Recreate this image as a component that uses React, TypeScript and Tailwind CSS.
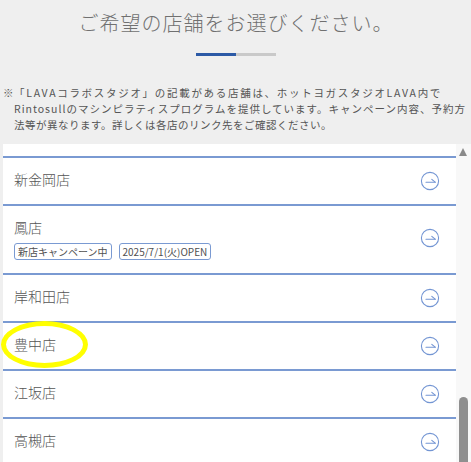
import React from 'react'

const stores = [
  { name: '新金岡店' },
  { name: '鳳店', tags: ['新店キャンペーン中', '2025/7/1(火)OPEN'] },
  { name: '岸和田店' },
  { name: '豊中店' },
  { name: '江坂店' },
  { name: '高槻店' },
]

function CircleArrow() {
  return (
    <svg width="20" height="20" viewBox="0 0 20 20" fill="none" stroke="#7395d3" strokeWidth="1.1">
      <circle cx="10" cy="10" r="8.6" />
      <path d="M6 11.2 H15.2" strokeLinecap="round" />
      <path d="M15.2 11.2 L11.8 8.4" strokeLinecap="round" />
    </svg>
  )
}

export default function App() {
  return (
    <div
      className="relative h-[462px] w-full overflow-hidden bg-[#efefef]"
      style={{ fontFamily: '"Noto Sans CJK JP", "Noto Sans", sans-serif' }}
    >
      {/* heading */}
      <div className="pt-[9px] flex flex-col items-center">
        <h1 className="text-[20px] leading-[28px] font-light tracking-[1px] text-[#707070] pl-[1px]">
          ご希望の店舗をお選びください。
        </h1>
        <div className="mt-[16px] flex h-[3px] w-[80px]">
          <div className="w-[40px] bg-[#2c5aa6]" />
          <div className="flex-1 bg-[#c9c9c9]" />
        </div>
      </div>

      {/* note */}
      <div className="mt-[29px] flex px-[3px] text-[10.5px] leading-[16px] text-[#555]">
        <span className="w-[11px] shrink-0">※</span>
        <div>
          <span className="block whitespace-nowrap tracking-[1.7px]">
            「LAVAコラボスタジオ」の記載がある店舗は、ホットヨガスタジオLAVA内で
          </span>
          <span className="block whitespace-nowrap tracking-[1px]">
            Rintosullのマシンピラティスプログラムを提供しています。キャンペーン内容、予約方
          </span>
          <span className="block whitespace-nowrap tracking-[0.5px]">
            法等が異なります。詳しくは各店のリンク先をご確認ください。
          </span>
        </div>
      </div>

      {/* store list panel */}
      <div className="mt-[11px] ml-[3px] flex h-[318px] overflow-hidden bg-white">
        <div className="flex-1">
          <div className="h-[12px]" />
          {stores.map((s) => (
            <div
              key={s.name}
              className={`flex items-center justify-between border-t-2 border-[#7a9ad2] pl-[11px] pr-[16px] ${
                s.tags ? 'pt-[10px] pb-[13px]' : 'h-[48px]'
              }`}
            >
              <div className={s.tags ? '' : 'pb-[4px]'}>
                <div className="text-[14px] leading-[22px] font-light text-[#555]">{s.name}</div>
                {s.tags && (
                  <div className="mt-[5px] flex gap-[7px]">
                    {s.tags.map((t) => (
                      <span
                        key={t}
                        className="flex h-[17px] items-center rounded-[3px] border border-[#7a9ad2] px-[3px] text-[10px] text-[#505050]"
                      >
                        {t}
                      </span>
                    ))}
                  </div>
                )}
              </div>
              <CircleArrow />
            </div>
          ))}
        </div>

        {/* scrollbar */}
        <div className="relative w-[15px] shrink-0 bg-[#f8f8f8]">
          <div className="absolute left-[3px] top-[4px] h-0 w-0 border-x-[4.5px] border-b-[8px] border-x-transparent border-b-[#8a8a8a]" />
          <div className="absolute left-[3px] top-[253px] h-[80px] w-[9px] rounded-t-full bg-[#8f8f8f]" />
        </div>
      </div>

      {/* highlight annotation */}
      <div className="absolute left-[1px] top-[321px] h-[47px] w-[87px] rounded-[50%] border-[5px] border-[#ffff00]" />
    </div>
  )
}
